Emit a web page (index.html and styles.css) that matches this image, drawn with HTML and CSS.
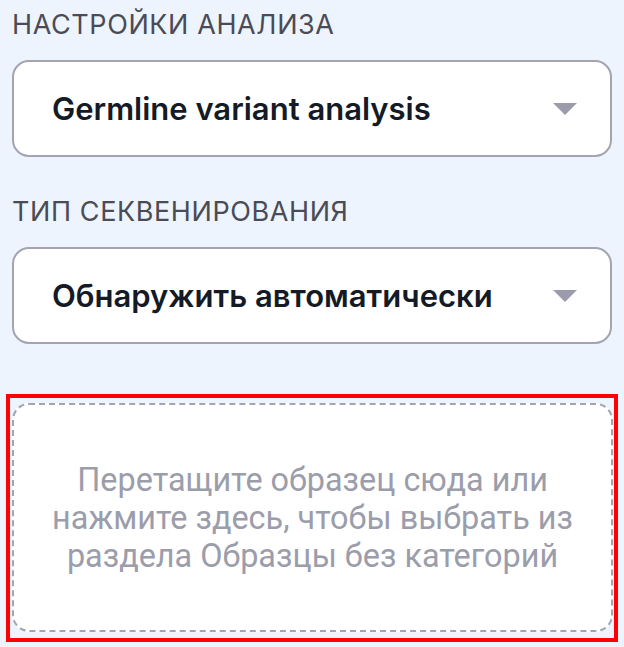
FILE: index.html
```html
<!DOCTYPE html>
<html lang="ru">
<head>
<meta charset="utf-8">
<link rel="stylesheet" href="styles.css">
</head>
<body>
<div class="panel">
  <div class="label">Настройки анализа</div>
  <div class="select">
    <span class="select-text">Germline variant analysis</span>
    <svg class="caret" width="24" height="12" viewBox="0 0 24 12"><path d="M0 0 H24 L12 12 Z" fill="#9b9bab"/></svg>
  </div>
  <div class="label">Тип секвенирования</div>
  <div class="select">
    <span class="select-text">Обнаружить автоматически</span>
    <svg class="caret" width="24" height="12" viewBox="0 0 24 12"><path d="M0 0 H24 L12 12 Z" fill="#9b9bab"/></svg>
  </div>
  <div class="drop-wrap">
    <div class="drop">Перетащите образец сюда или нажмите здесь, чтобы выбрать из раздела Образцы без категорий</div>
  </div>
</div>
</body>
</html>
```

FILE: styles.css
```css
html, body {
  margin: 0;
  padding: 0;
  background: #edf4fe;
}
.panel {
  padding: 9px 12px 0 12px;
  display: flex;
  flex-direction: column;
  font-family: Inter, "Noto Sans", sans-serif;
}
.label {
  font-size: 27px;
  line-height: 32px;
  letter-spacing: 0.6px;
  text-transform: uppercase;
  color: #4b4b55;
  margin-bottom: 19px;
}
.select {
  box-sizing: border-box;
  height: 97px;
  border: 2px solid #a3a3b2;
  border-radius: 17px;
  background: #fff;
  display: flex;
  align-items: center;
  justify-content: space-between;
  padding: 0 33px 0 38px;
  margin-bottom: 39px;
}
.select-text {
  font-size: 31px;
  font-weight: 600;
  color: #141a26;
}
.caret {
  display: block;
}
.drop-wrap {
  margin: 11px -6px 0 -6px;
  border: 4px solid #ff0000;
  padding: 5px 1px 6px 2px;
  height: 248px;
  box-sizing: border-box;
}
.drop {
  height: 100%;
  box-sizing: border-box;
  border: 2px dashed #a3a3b2;
  border-radius: 17px;
  background: #fff;
  display: flex;
  align-items: center;
  justify-content: center;
  text-align: center;
  padding: 0 30px;
  font-family: Roboto, sans-serif;
  font-size: 32.4px;
  line-height: 38px;
  color: #9b9dab;
}
```
